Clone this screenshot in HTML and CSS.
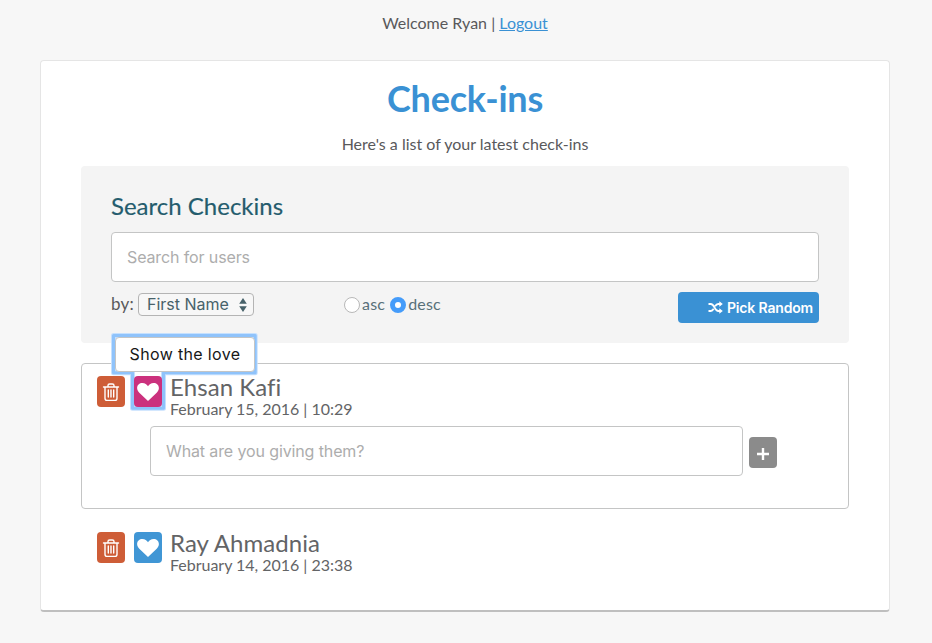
FILE: index.html
```html
<!DOCTYPE html>
<html lang="en">
<head>
<meta charset="utf-8">
<title>Check-ins</title>
<link rel="stylesheet" href="styles.css">
</head>
<body>
<svg class="defs" width="0" height="0">
  <symbol id="trash" viewBox="0 0 18 20">
    <path d="M1.500 5h15M6 4.800V3.600Q6 2 7.600 2h2.800Q12 2 12 3.600v1.200M3 5v11.200Q3 18.400 5.200 18.400h7.600q2.200 0 2.200-2.200V5M6.300 8v7M9 8v7M11.700 8v7" fill="none" stroke="currentColor" stroke-width="1.400" stroke-linecap="round"/>
  </symbol>
  <symbol id="heart" viewBox="0 0 22 20">
    <path d="M11 19 2.300 10.700C-2.200 5.800 1 1 5.400 1 8 1 9.800 2.600 11 4.300 12.200 2.600 14 1 16.600 1 21 1 24.200 5.800 19.700 10.700Z" fill="currentColor"/>
  </symbol>
</svg>
<header class="user">Welcome Ryan | <a href="#">Logout</a></header>
<main class="card">
  <h1>Check-ins</h1>
  <p class="lead">Here's a list of your latest check-ins</p>
  <section class="search">
    <h2>Search Checkins</h2>
    <input class="field" type="text" placeholder="Search for users">
    <div class="controls">
      <div class="by"><span class="by-label">by:</span>
        <span class="select"><span>First Name</span>
          <svg width="8" height="14" viewBox="0 0 8 14"><path d="M4 0 7.800 5.800H.2ZM4 14 .2 8.200h7.600Z" fill="#47626a"/></svg>
        </span>
      </div>
      <div class="order">
        <label><span class="radio"></span>asc</label>
        <label><span class="radio on"></span>desc</label>
      </div>
      <button class="random">
        <svg width="15" height="13" viewBox="0 0 15 13"><path d="M.5 3h2.300C6.500 3 6.700 10 10.200 10H12M.5 10h2.300c1.400 0 2.200-1 2.900-2.200M7.100 5.200C7.900 3.900 8.700 3 10.200 3H12" fill="none" stroke="#fff" stroke-width="1.800"/><path d="M11.300.3 14.800 3l-3.500 2.700ZM11.300 7.300 14.800 10l-3.500 2.700Z" fill="#fff"/></svg>
        <span>Pick Random</span>
      </button>
    </div>
  </section>
  <article class="checkin open">
    <svg class="ring" width="156" height="84" viewBox="0 0 156 84">
      <path d="M5.500 4.500H147.200V41.800H55.500V77.200H24.500V41.800H5.500Z" fill="none" stroke="#c5e0fe" stroke-width="5" stroke-linejoin="round"/>
      <path d="M5.500 4.500H147.200V41.800H55.500V77.200H24.500V41.800H5.500Z" fill="none" stroke="#8fc3fb" stroke-width="3" stroke-linejoin="round"/>
    </svg>
    <div class="row">
      <button class="btn delete"><svg width="18" height="20"><use href="#trash"/></svg></button>
      <button class="btn love active"><svg width="22" height="20"><use href="#heart"/></svg></button>
      <div class="who"><h3>Ehsan Kafi</h3><time>February 15, 2016 | 10:29</time></div>
    </div>
    <span class="tooltip">Show the love</span>
    <div class="award">
      <input class="field" type="text" placeholder="What are you giving them?">
      <button class="btn add"><svg width="12" height="12" viewBox="0 0 12 12"><path d="M0 6h12M6 0v12" stroke="#fff" stroke-width="2.400"/></svg></button>
    </div>
  </article>
  <article class="checkin">
    <div class="row">
      <button class="btn delete"><svg width="18" height="20"><use href="#trash"/></svg></button>
      <button class="btn love"><svg width="22" height="20"><use href="#heart"/></svg></button>
      <div class="who"><h3>Ray Ahmadnia</h3><time>February 14, 2016 | 23:38</time></div>
    </div>
  </article>
</main>
</body>
</html>
```
FILE: styles.css
```css
* { box-sizing: border-box; }
body {
  margin: 0;
  height: 643px;
  overflow: hidden;
  background: #f7f7f7;
  color: #59595b;
  font: 16px/24px Lato, sans-serif;
}
h1, h2, h3, p { margin: 0; }
button { border: 0; padding: 0; font: inherit; color: #fff; }
svg { display: block; }
.defs { position: absolute; }
.user { width: 930px; padding-top: 11px; height: 60px; text-align: center; }
a { color: #3a91d4; }
.card {
  width: 850px;
  height: 552px;
  margin-left: 40px;
  padding: 13px 40px 0;
  background: #fff;
  border: 1px solid #e5e5e5;
  border-bottom: 2px solid #bfbfbf;
  border-radius: 4px;
}
h1 { color: #3a91d4; font-size: 36px; line-height: 48px; font-weight: 700; text-align: center; letter-spacing: -0.2px; }
.lead { margin-top: 10px; height: 34px; text-align: center; }
.search {
  height: 177px;
  padding: 25px 30px 0;
  background: #f4f4f4;
  border-radius: 4px;
}
h2 { height: 41px; font-size: 24px; line-height: 30px; font-weight: 400; color: #245c6d; -webkit-text-stroke: 0.15px; }
.field {
  display: block;
  width: 100%;
  height: 50px;
  padding: 0 15px;
  border: 1px solid #c4c5c5;
  border-radius: 4px;
  background: #fff;
  font: 16px Inter, sans-serif;
  letter-spacing: -0.12px;
}
.field::placeholder { color: #adadad; opacity: 1; }
.controls { display: flex; margin-top: 10px; }
.by { display: flex; width: 233px; }
.by-label { width: 27px; font-size: 17px; letter-spacing: 0.2px; }
.select {
  display: flex;
  align-items: center;
  justify-content: space-between;
  width: 116px;
  height: 23px;
  margin-top: 1px;
  padding: 0 6px 0 8px;
  border: 1px solid #b4b4b4;
  border-radius: 4px;
  background: #f7f7f7;
  color: #47626a;
  font: 16px/21px Inter, sans-serif;
}
.order { display: flex; gap: 5px; color: #587079; line-height: 22px; letter-spacing: 0.2px; }
.order label { display: flex; align-items: flex-start; height: 26px; padding-top: 1px; gap: 2px; }
.radio { width: 16px; height: 16px; margin-top: 4px; border: 1px solid #b8b8b8; border-radius: 50%; background: #fff; }
.radio.on { border: 5px solid #459cfa; }
.random {
  display: flex;
  align-items: center;
  justify-content: flex-end;
  gap: 4px;
  width: 141px;
  height: 31px;
  margin-left: auto;
  padding-right: 6px;
  border-radius: 4px;
  background: #3a91d4;
  font: 600 14px Inter, sans-serif;
  letter-spacing: -0.17px;
}
.checkin { position: relative; height: 146px; padding: 8px 15px 0; border: 1px solid transparent; border-radius: 4px; }
.checkin.open { margin-top: 20px; border-color: #c4c5c5; }
.checkin:not(.open) { height: 90px; margin-top: 10px; }
.row { position: relative; display: flex; padding-top: 4px; height: 54px; }
.btn { display: flex; align-items: center; justify-content: center; flex: none; width: 28px; height: 31px; border-radius: 4px; }
.delete { margin-right: 9px; background: #ce5d37; }
.love { margin-right: 8px; background: #4096d5; }
.love.active { background: #cb317d; }
.who { margin-top: -3px; color: #636466; }
h3 { height: 27px; font-size: 24px; line-height: 28px; font-weight: 400; letter-spacing: 0.05px; }
time { display: block; font-size: 16px; line-height: 18px; letter-spacing: -0.02px; }
.ring { position: absolute; left: 26px; top: -33px; }
.tooltip {
  position: absolute;
  left: 33px;
  top: -27px;
  width: 140px;
  height: 35px;
  border: 1px solid #c4c5c5;
  border-radius: 4px;
  background: #fff;
  color: #171717;
  font: 16px/33px Inter, sans-serif;
  letter-spacing: 0.35px;
  text-align: center;
}
.award { display: flex; align-items: center; gap: 6px; margin-left: 53px; }
.award .field { width: 593px; }
.add { background: #8b8b8b; margin-top: 2px; padding-top: 4px; }
```
